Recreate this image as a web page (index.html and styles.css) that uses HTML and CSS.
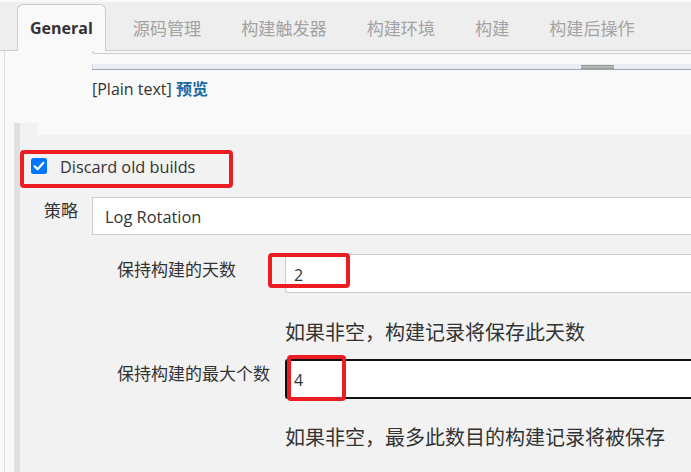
FILE: index.html
```html
<!DOCTYPE html>
<html lang="zh">
<head>
<meta charset="utf-8">
<title>General</title>
<link rel="stylesheet" href="styles.css">
</head>
<body>
<div class="tabbar">
  <div class="tab active">General</div>
  <div class="tab">源码管理</div>
  <div class="tab">构建触发器</div>
  <div class="tab">构建环境</div>
  <div class="tab">构建</div>
  <div class="tab">构建后操作</div>
</div>
<div class="panel">
  <div class="ta-end"></div>
  <div class="ta-scroll"><span class="thumb"></span></div>
  <div class="preview">[Plain text] <a class="preview-link">预览</a></div>
  <div class="block">
    <div class="block-top"></div>
    <div class="opt-row">
      <span class="checkbox"><svg width="16" height="16" viewBox="0 0 16 16"><rect x="0" y="0" width="16" height="16" rx="2.5" fill="#0075ff"/><path d="M3.6 8.3 L6.6 11.2 L12.4 4.8" fill="none" stroke="#fff" stroke-width="2.2" stroke-linecap="round" stroke-linejoin="round"/></svg></span>
      <span class="opt-label">Discard old builds</span>
      <span class="mark mark-opt"></span>
    </div>
    <div class="row row-strategy">
      <div class="label label-strategy">策略</div>
      <div class="select">Log Rotation</div>
    </div>
    <div class="row row-nested row-days">
      <div class="label label-nested">保持构建的天数</div>
      <div class="field">
        <div class="input">2</div>
        <span class="mark mark-days"></span>
      </div>
    </div>
    <div class="help">如果非空，构建记录将保存此天数</div>
    <div class="row row-nested row-num">
      <div class="label label-nested label-num">保持构建的最大个数</div>
      <div class="field">
        <div class="input input-focus">4</div>
        <span class="mark mark-num"></span>
      </div>
    </div>
    <div class="help help-2">如果非空，最多此数目的构建记录将被保存</div>
  </div>
</div>
</body>
</html>
```
FILE: styles.css
```css
html, body {
  margin: 0;
  padding: 0;
}
body {
  background: #f9f9f9;
  font-family: "Open Sans", "Noto Sans CJK SC", sans-serif;
  color: #333;
  width: 691px;
  height: 472px;
  overflow: hidden;
}
.tabbar {
  display: flex;
  align-items: flex-end;
  margin-top: 2px;
  background: #eeeeee;
  border-bottom: 1px solid #cccccc;
  padding-left: 17px;
  box-sizing: border-box;
  height: 49px;
}
.tab {
  display: flex;
  align-items: center;
  height: 46px;
  padding: 0 13px;
  margin-right: 14px;
  font-size: 17.1px;
  color: #a3a3a3;
  white-space: nowrap;
  box-sizing: border-box;
}
.tab.active {
  background: #f9f9f9;
  border: 1px solid #cccccc;
  border-bottom: none;
  border-radius: 6px 6px 0 0;
  color: #333;
  font-weight: 700;
  font-size: 16px;
  padding: 0 12px;
  margin-bottom: -1px;
  height: 47px;
}
.panel {
  margin-left: 4px;
  border-left: 1px solid #dddddd;
  height: 430px;
}
.ta-end {
  margin-left: 87px;
  height: 2px;
  border-left: 1px solid #cccccc;
  border-bottom: 1px solid #cccccc;
  border-bottom-left-radius: 3px;
}
.ta-scroll {
  position: relative;
  margin-left: 87px;
  margin-top: 10px;
  height: 5px;
  background: #e8eef3;
  border-left: 1px solid #c8d0d8;
  border-bottom: 1px solid #9ba7b1;
}
.thumb {
  position: absolute;
  left: 488px;
  top: 1px;
  width: 33px;
  height: 4px;
  background: #b5b8b0;
  border-top: 1px solid #999;
  border-bottom: 1px solid #999;
  box-sizing: border-box;
}
.preview {
  margin-left: 87px;
  margin-top: 8px;
  font-size: 16px;
  line-height: 22px;
  color: #333;
}
.preview-link {
  color: #1a6aa6;
  font-weight: 700;
}
.block {
  margin-left: 9px;
  margin-top: 23px;
  border-left: 6px solid #e0e0e0;
  background: #f2f2f2;
  height: 360px;
}
.block-top {
  margin-left: 18px;
  height: 12px;
  background: #f9f9f9;
}
.opt-row {
  position: relative;
  display: flex;
  align-items: flex-start;
  margin-top: 15px;
  height: 38px;
  padding-left: 11px;
  padding-top: 8px;
  box-sizing: border-box;
}
.checkbox {
  display: block;
  width: 16px;
  height: 16px;
}
.checkbox svg {
  display: block;
}
.opt-label {
  margin-left: 13px;
  font-size: 16.3px;
  line-height: 18px;
  color: #333;
}
.mark {
  position: absolute;
  border: 4px solid #ec1c24;
  border-radius: 4px;
  box-sizing: border-box;
  pointer-events: none;
}
.mark-opt {
  left: 0;
  top: 0;
  width: 213px;
  height: 38px;
}
.row {
  display: flex;
  align-items: flex-start;
}
.row-strategy {
  margin-top: 9px;
}
.label {
  font-size: 17px;
  line-height: 24px;
  color: #333;
  white-space: nowrap;
}
.label-strategy {
  width: 48px;
  margin-left: 24px;
  padding-top: 2px;
}
.select {
  flex: 1;
  height: 38px;
  background: #fff;
  border: 1px solid #cccccc;
  border-right: none;
  box-sizing: border-box;
  padding-left: 12px;
  font-size: 16.4px;
  line-height: 38px;
}
.row-nested {
  margin-top: 19px;
}
.label-nested {
  width: 168px;
  margin-left: 97px;
  padding-top: 4px;
}
.label-num {
  padding-top: 3px;
}
.field {
  position: relative;
  flex: 1;
}
.input {
  height: 39px;
  background: #fff;
  border: 1px solid #cccccc;
  border-right: none;
  border-radius: 3px 0 0 3px;
  box-sizing: border-box;
  padding-left: 8px;
  padding-top: 8px;
  font-size: 16px;
  line-height: 24px;
}
.input-focus {
  height: 40px;
  border: 2px solid #111;
  border-right: none;
  padding-left: 7px;
  padding-top: 7px;
}
.mark-days {
  left: -17px;
  top: -1px;
  width: 82px;
  height: 35px;
}
.mark-num {
  left: 2px;
  top: -4px;
  width: 59px;
  height: 46px;
}
.help {
  margin-left: 265px;
  margin-top: 26px;
  font-size: 20px;
  line-height: 28px;
  color: #333;
  white-space: nowrap;
}
.row-num {
  margin-top: 12px;
}
.help-2 {
  margin-top: 25px;
}
```
